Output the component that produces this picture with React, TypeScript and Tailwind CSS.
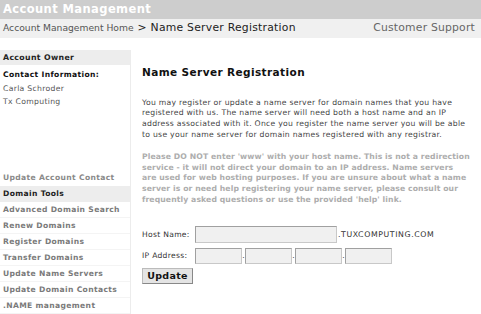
const font = { fontFamily: '"DejaVu Sans", Verdana, sans-serif' };

const domainTools = [
  "Advanced Domain Search",
  "Renew Domains",
  "Register Domains",
  "Transfer Domains",
  "Update Name Servers",
  "Update Domain Contacts",
  ".NAME management",
];

function IpBox() {
  return (
    <input className="h-[16px] w-[47px] border border-[#c8c8c8] border-t-[#a0a0a0] border-l-[#a0a0a0] bg-[#f0f0f0] outline-none" />
  );
}

export default function App() {
  return (
    <div className="h-[314px] w-[481px] overflow-hidden bg-white text-[#444]" style={font}>
      <div className="flex h-[19px] items-center bg-[#cdcdcd] pl-[3px] text-[11.5px] font-bold leading-none tracking-[0.4px] text-white">
        Account Management
      </div>
      <div className="flex h-[19px] items-center justify-between bg-[#f0f0f0] pl-[3px] pr-[6px]">
        <div className="flex items-baseline">
          <span className="text-[9.2px] text-[#555]">Account Management Home</span>
          <span className="ml-[4px] text-[10.8px] tracking-[0.25px] text-[#222]">&gt; Name Server Registration</span>
        </div>
        <span className="text-[10.8px] tracking-[0.2px] text-[#666]">Customer Support</span>
      </div>

      <div className="mt-[12px] flex">
        <aside className="w-[131px] shrink-0 border-r border-[#ececec] tracking-[0.35px]">
          <div className="flex h-[15px] items-center bg-[#ededed] pl-[3px] text-[7.8px] font-bold text-[#222]">
            Account Owner
          </div>
          <div className="h-[104px] pl-[3px] pt-[4px]">
            <div className="text-[7.6px] font-bold leading-[12px] text-[#111]">Contact Information:</div>
            <div className="mt-[1px] text-[7.7px] leading-[13px] tracking-[0.3px] text-[#555]">Carla Schroder</div>
            <div className="text-[7.7px] leading-[13px] tracking-[0.3px] text-[#555]">Tx Computing</div>
          </div>
          <div className="flex h-[17px] items-center pl-[3px] text-[7.6px] font-bold text-[#8a8a8a]">
            Update Account Contact
          </div>
          <div className="flex h-[16px] items-center bg-[#ededed] pl-[3px] text-[7.6px] font-bold text-[#222]">
            Domain Tools
          </div>
          {domainTools.map((t) => (
            <div
              key={t}
              className="flex h-[16px] items-center border-b border-[#f4f4f4] pl-[3px] text-[7.6px] font-bold text-[#7a7a7a]"
            >
              {t}
            </div>
          ))}
        </aside>

        <main className="min-w-0 flex-1 pl-[11px] pt-[15px]">
          <h1 className="text-[10.5px] font-bold leading-[14px] tracking-[0.4px] text-[#111]">
            Name Server Registration
          </h1>
          <p className="mt-[18.6px] pr-[10px] text-[7.7px] leading-[10.7px] tracking-[0.27px] text-[#444]">
            You may register or update a name server for domain names that you have registered with us. The name
            server will need both a host name and an IP address associated with it. Once you register the name
            server you will be able to use your name server for domain names registered with any registrar.
          </p>
          <p className="mt-[11.2px] whitespace-nowrap text-[7.7px] font-bold leading-[10.9px] tracking-[0.1px] text-[#adadad]">
            Please DO NOT enter 'www' with your host name. This is not a redirection
            <br />
            service - it will not direct your domain to an IP address. Name servers
            <br />
            are used for web hosting purposes. If you are unsure about what a name
            <br />
            server is or need help registering your name server, please consult our
            <br />
            frequently asked questions or use the provided 'help' link.
          </p>

          <div className="mt-[20px] flex items-center text-[7.6px] tracking-[0.3px] text-[#333]">
            <span className="w-[53px]">Host Name:</span>
            <input className="h-[17px] w-[142px] border border-[#c8c8c8] border-t-[#a0a0a0] border-l-[#a0a0a0] bg-[#f0f0f0] outline-none" />
            <span className="ml-[1px] text-[7.8px] tracking-[0.6px]">.TUXCOMPUTING.COM</span>
          </div>
          <div className="mt-[5px] flex items-center text-[7.6px] tracking-[0.3px] text-[#333]">
            <span className="w-[53px]">IP Address:</span>
            <IpBox />
            <span className="w-[3px] text-center">.</span>
            <IpBox />
            <span className="w-[3px] text-center">.</span>
            <IpBox />
            <span className="w-[3px] text-center">.</span>
            <IpBox />
          </div>
          <button className="mt-[4px] flex h-[16px] w-[51px] items-center justify-center border border-[#bbb] border-b-[#888] border-r-[#888] bg-[#e4e4e4] text-[9.5px] font-bold leading-none tracking-[0.3px] text-[#111]">
            Update
          </button>
        </main>
      </div>
    </div>
  );
}
